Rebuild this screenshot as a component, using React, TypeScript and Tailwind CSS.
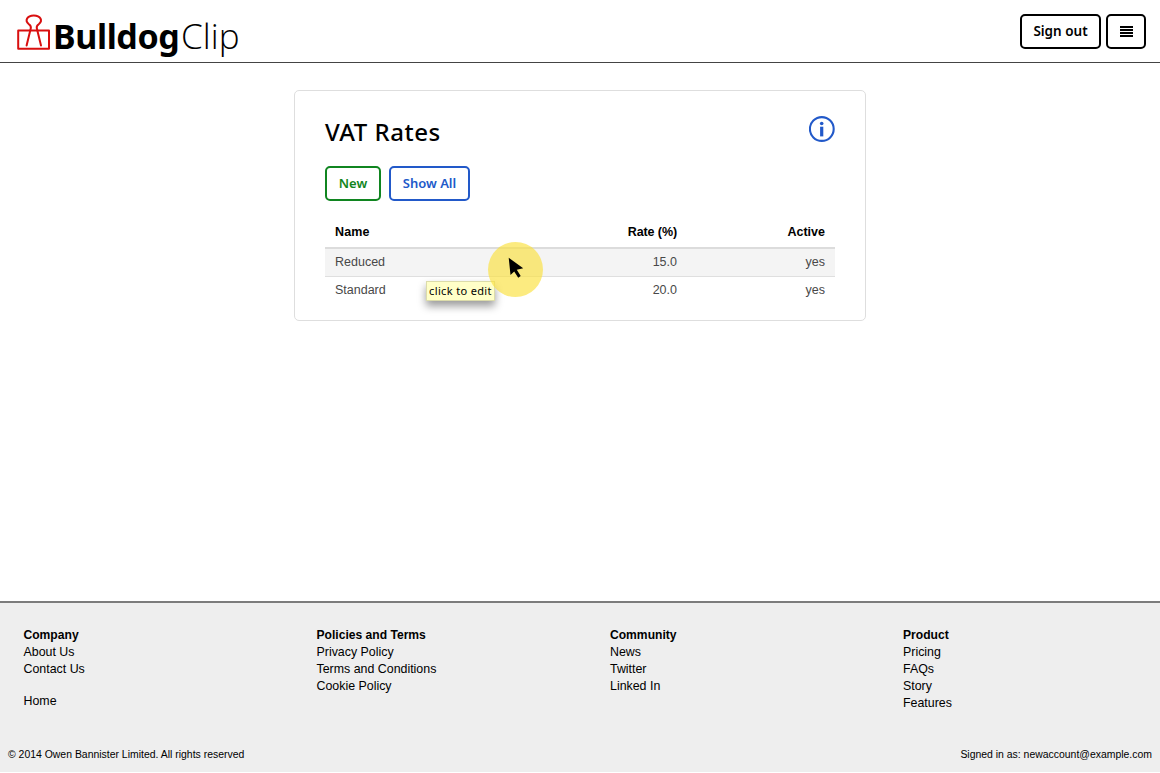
import React from "react";

const columns = [
  { title: "Company", links: ["About Us", "Contact Us"], extra: "Home" },
  { title: "Policies and Terms", links: ["Privacy Policy", "Terms and Conditions", "Cookie Policy"] },
  { title: "Community", links: ["News", "Twitter", "Linked In"] },
  { title: "Product", links: ["Pricing", "FAQs", "Story", "Features"] },
];

const rates = [
  { name: "Reduced", rate: "15.0", active: "yes" },
  { name: "Standard", rate: "20.0", active: "yes" },
];

function Logo() {
  return (
    <a className="flex items-start text-black" href="#">
      <svg className="mt-[13px] h-[38px] w-9 shrink-0" viewBox="0 0 36 38" fill="none" stroke="#d90f0f" strokeWidth="2" strokeLinejoin="round" strokeLinecap="round">
        <rect x="2.2" y="17.4" width="30.8" height="18.4" />
        <path d="M10.6 32.6 14.8 15.2C15.3 13 14.3 12.2 12.9 11.2C8.4 7.7 11 2.4 17.8 2.4S27.2 7.7 22.7 11.2C21.3 12.2 20.3 13 20.8 15.2L25 32.6" />
      </svg>
      <span className="ml-px mt-3 w-[128px] whitespace-nowrap font-['Noto_Sans','Open_Sans',sans-serif] text-[34px] font-bold leading-[48px] tracking-[-0.4px]">Bulldog</span>
      <span className="mt-3 whitespace-nowrap font-['Open_Sans','Noto_Sans',sans-serif] text-[35px] font-light leading-[48px] tracking-[0.1px]">Clip</span>
    </a>
  );
}

function Header() {
  return (
    <header className="flex h-[63px] items-start justify-between border-b border-[#444] pl-4 pr-3.5">
      <Logo />
      <div className="mt-3.5 flex gap-[5px]">
        <button className="h-[35px] w-[81px] rounded-[5px] border-2 border-black pb-0.5 font-['Noto_Sans',sans-serif] text-[13.5px] font-semibold leading-[18px]">Sign out</button>
        <button aria-label="Menu" className="flex h-[35px] w-10 items-center justify-center rounded-[5px] border-2 border-black">
          <svg className="h-[11px] w-[13px]" viewBox="0 0 13 11" fill="none" stroke="black" strokeWidth="2">
            <path d="M0 1H13M0 4H13M0 7H13M0 10H13" />
          </svg>
        </button>
      </div>
    </header>
  );
}

function RatesTable() {
  return (
    <table className="mt-[18px] w-full table-fixed border-separate border-spacing-0 text-[12.5px] leading-[17px]">
      <colgroup>
        <col className="w-[210px]" />
        <col className="w-[152px]" />
        <col />
      </colgroup>
      <thead>
        <tr className="h-[30px] text-black">
          <th className="border-b-2 border-[#dcdcdc] px-2.5 pb-px text-left font-bold tracking-[0.1px]">Name</th>
          <th className="border-b-2 border-[#dcdcdc] px-2.5 pb-px text-right font-bold tracking-[-0.1px]">Rate (%)</th>
          <th className="border-b-2 border-[#dcdcdc] px-2.5 pb-px text-right font-bold">Active</th>
        </tr>
      </thead>
      <tbody className="text-[#484848]">
        {rates.map((r, i) => (
          <tr key={r.name} className={i === 0 ? "h-7 bg-[#f4f4f4] *:border-b *:border-[#dfdfdf]" : "h-7"}>
            <td className="px-2.5 pb-px">{r.name}</td>
            <td className="px-2.5 pb-px text-right">{r.rate}</td>
            <td className="px-2.5 pb-px text-right">{r.active}</td>
          </tr>
        ))}
      </tbody>
    </table>
  );
}

function Pointer() {
  return (
    <>
      <div className="absolute left-[426px] top-[281px] flex h-5 w-[69px] items-center justify-center whitespace-nowrap border border-[#dcdcaa] bg-[#ffffc8] font-['Noto_Sans',sans-serif] text-[11px] tracking-[0.35px] text-black shadow-[0_5px_9px_rgba(0,0,0,0.4)]">click to edit</div>
      <div className="absolute left-[488px] top-[242px] h-[55px] w-[55px] rounded-full bg-[#fae03c]/65">
        <svg className="absolute left-5 top-[15px] h-[22px] w-4" viewBox="0 0 16 22">
          <path d="M.7 .7 2.5 18 6.2 14.4 10.2 20.7 12.7 19.1 8.8 12.8 15.2 11.2Z" className="fill-black" />
        </svg>
      </div>
    </>
  );
}

export default function App() {
  return (
    <div className="relative flex h-[773px] w-[1160px] flex-col overflow-hidden bg-white font-['Liberation_Sans',Arial,sans-serif] text-black">
      <Header />
      <main className="flex-1">
        <section className="mx-auto mt-[27px] h-[231px] w-[572px] rounded-[5px] border border-[#dedede] px-[30px]">
          <div className="flex h-[75px] items-start justify-between">
            <h1 className="mt-6 font-['Noto_Sans',sans-serif] text-[24px] font-medium leading-[34px] tracking-[0.5px]">VAT Rates</h1>
            <svg aria-label="Information" className="mt-[25px] h-[26px] w-[26px]" viewBox="0 0 26 26" fill="none" stroke="#2259c9">
              <circle cx="12.8" cy="13" r="11.9" strokeWidth="2.1" />
              <path d="M12.7 10.7V20.4" strokeWidth="3.2" />
              <circle cx="12.7" cy="7.5" r="1.8" fill="#2259c9" stroke="none" />
            </svg>
          </div>
          <div className="flex gap-2 font-['Noto_Sans',sans-serif] text-[13px] font-semibold leading-[18px]">
            <button className="h-[35px] w-[56px] rounded-[5px] border-2 border-[#108520] pb-0.5 text-[#108520]">New</button>
            <button className="h-[35px] w-[81px] rounded-[5px] border-2 border-[#2259c9] pb-0.5 text-[#2259c9]">Show All</button>
          </div>
          <RatesTable />
        </section>
      </main>
      <footer className="mb-px h-[171px] border-t-2 border-[#7c7c7c] bg-[#eee]">
        <div className="grid h-[144px] grid-cols-[293px_293.5px_293px_1fr] pl-[23.5px] pt-6 text-[12.4px] leading-[17px]">
          {columns.map((c) => (
            <div key={c.title}>
              <h2 className="text-[12.1px] font-bold">{c.title}</h2>
              <ul>
                {c.links.map((l) => (
                  <li key={l}>{l}</li>
                ))}
              </ul>
              {c.extra && <p className="mt-[15px]">{c.extra}</p>}
            </div>
          ))}
        </div>
        <div className="flex justify-between px-2 text-[10.45px] leading-[15px]">
          <span>© 2014 Owen Bannister Limited. All rights reserved</span>
          <span>Signed in as: newaccount@example.com</span>
        </div>
      </footer>
      <Pointer />
    </div>
  );
}
